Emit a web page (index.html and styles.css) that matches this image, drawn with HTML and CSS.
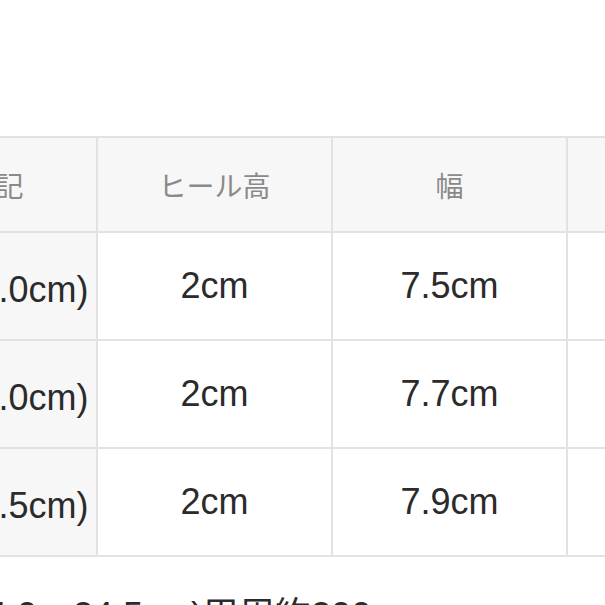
FILE: index.html
```html
<!DOCTYPE html>
<html lang="ja">
<head>
<meta charset="utf-8">
<title>サイズ表</title>
<link rel="stylesheet" href="styles.css">
</head>
<body>
<div class="sheet">
  <table class="size-table">
    <thead>
      <tr>
        <th class="label">サイズ表記</th>
        <th>ヒール高</th>
        <th>幅</th>
        <th>甲周</th>
      </tr>
    </thead>
    <tbody>
      <tr>
        <th class="label">Ｓ(22.5~23.0cm)</th>
        <td>2cm</td>
        <td>7.5cm</td>
        <td>21cm</td>
      </tr>
      <tr>
        <th class="label">Ｍ(23.5~24.0cm)</th>
        <td>2cm</td>
        <td>7.7cm</td>
        <td>22cm</td>
      </tr>
      <tr>
        <th class="label">Ｌ(24.0~24.5cm)</th>
        <td>2cm</td>
        <td>7.9cm</td>
        <td>23cm</td>
      </tr>
    </tbody>
  </table>
  <p class="note">(24.0〜24.5cm)甲周約200mm</p>
</div>
</body>
</html>
```

FILE: styles.css
```css
html, body {
  margin: 0;
  padding: 0;
  background: #ffffff;
  overflow: hidden;
}

.sheet {
  margin-left: -190px;
  padding-top: 136px;
  width: 1100px;
  font-family: "Liberation Sans", "Noto Sans CJK JP", sans-serif;
}

.size-table {
  border-collapse: separate;
  border-spacing: 0;
  border-top: 2px solid #e2e2e2;
  border-left: 2px solid #e2e2e2;
  table-layout: fixed;
}

.size-table th,
.size-table td {
  box-sizing: border-box;
  border-right: 2px solid #e2e2e2;
  border-bottom: 2px solid #e2e2e2;
  padding: 0;
  width: 235px;
  text-align: center;
  vertical-align: middle;
  white-space: nowrap;
}

.size-table th.label {
  width: 286px;
}

.size-table thead th {
  height: 95px;
  background: #f7f7f7;
  color: #8a8a8a;
  font-family: "Noto Sans CJK JP", sans-serif;
  font-weight: 400;
  font-size: 28px;
}

.size-table tbody th,
.size-table tbody td {
  height: 108px;
  color: #2b2b2b;
  font-weight: 400;
  font-size: 36px;
}

.size-table tbody th {
  background: #f7f7f7;
}

.size-table tbody td {
  background: #ffffff;
}

.note {
  margin: 41px 0 0;
  padding-left: 145px;
  font-size: 36px;
  line-height: 36px;
  color: #2b2b2b;
  white-space: nowrap;
}
```
